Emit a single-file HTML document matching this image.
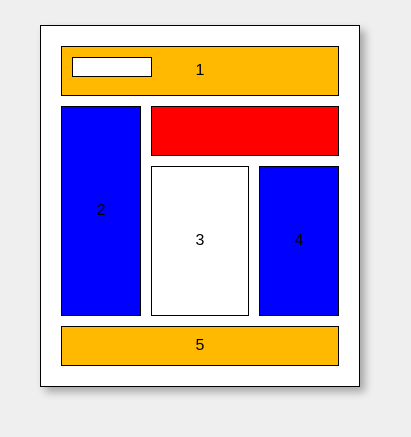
<!DOCTYPE html>
<html><head><style>
html,body{margin:0;padding:0;background:#efefef;width:411px;height:437px;overflow:hidden;font-family:"Liberation Sans",sans-serif;font-size:16px;}
.o{position:absolute;left:40px;top:25px;width:318px;height:360px;background:#fff;border:1px solid #000;box-shadow:5px 5px 8px rgba(0,0,0,0.3);}
.b{position:absolute;box-sizing:border-box;border:1px solid #000;display:flex;align-items:center;justify-content:center;color:#000;}
</style></head><body>
<div class="o"></div>
<div class="b" style="left:61px;top:46px;width:278px;height:50px;background:#ffb900">1</div>
<div class="b" style="left:72px;top:57px;width:80px;height:20px;background:#fff"></div>
<div class="b" style="left:61px;top:106px;width:80px;height:210px;background:#0000ff">2</div>
<div class="b" style="left:151px;top:106px;width:188px;height:50px;background:#ff0000"></div>
<div class="b" style="left:151px;top:166px;width:98px;height:150px;background:#fff">3</div>
<div class="b" style="left:259px;top:166px;width:80px;height:150px;background:#0000ff">4</div>
<div class="b" style="left:61px;top:326px;width:278px;height:40px;background:#ffb900">5</div>
</body></html>
